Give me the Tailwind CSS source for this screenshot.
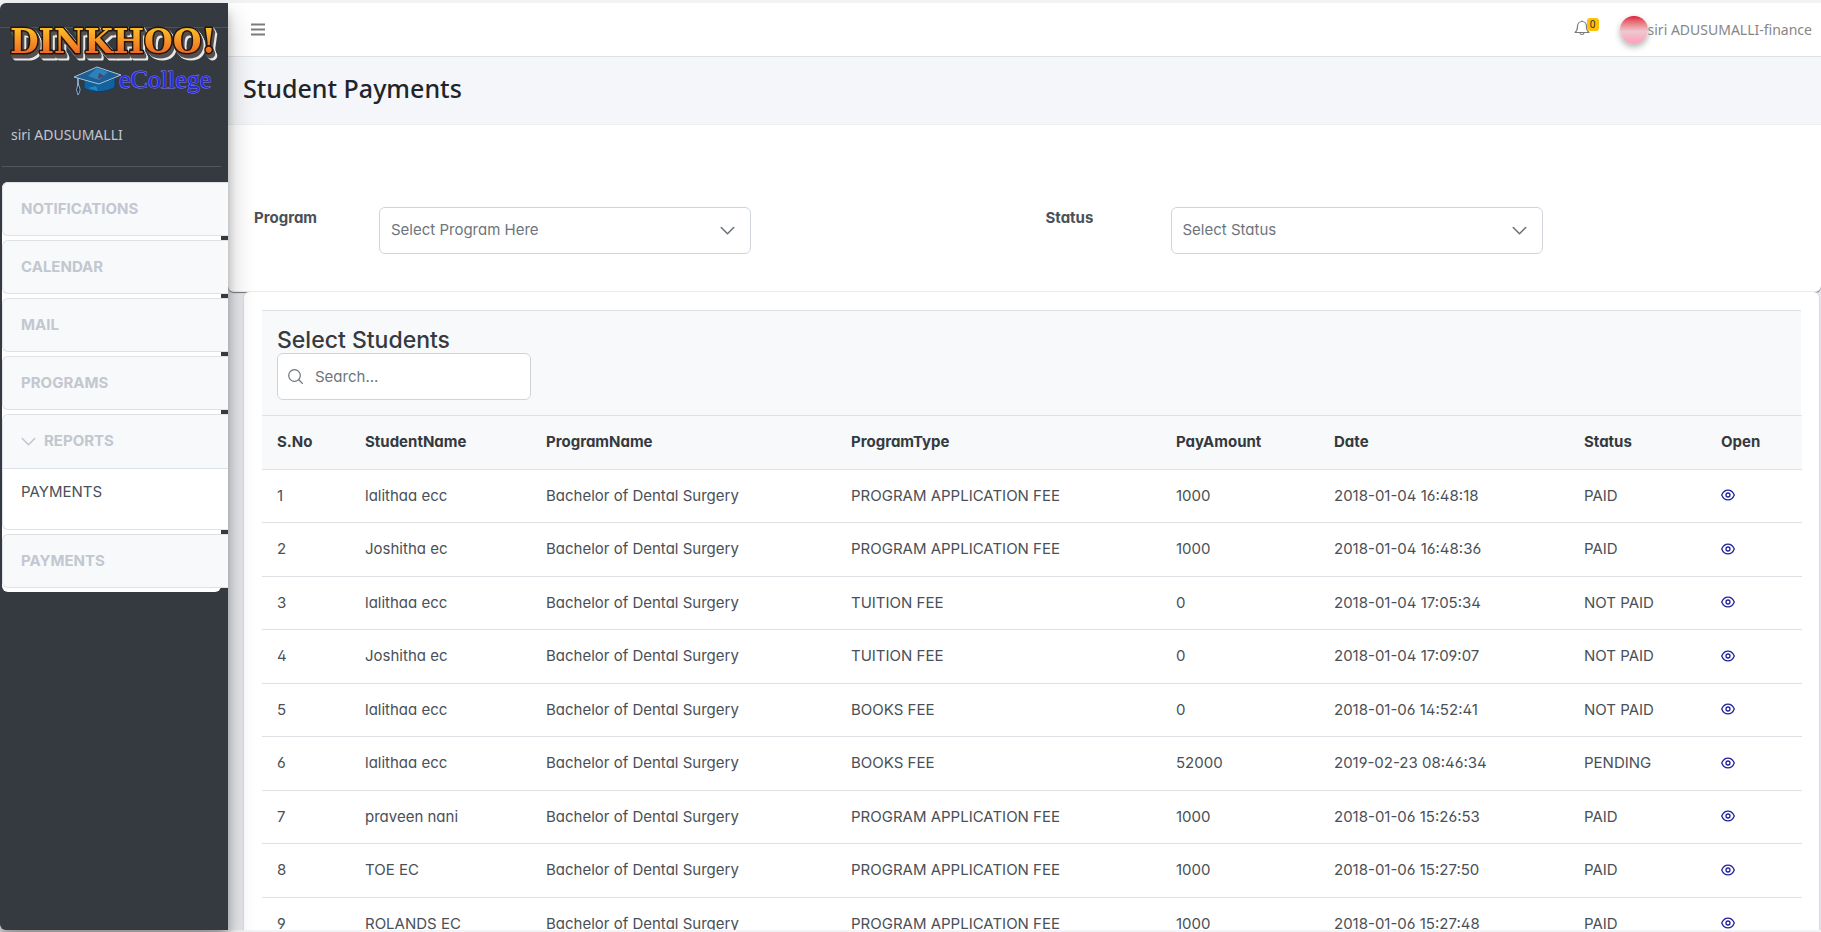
<!DOCTYPE html>
<html lang="en">
<head>
<meta charset="utf-8">
<meta name="viewport" content="width=device-width, initial-scale=1">
<title>Student Payments</title>
<script src="https://cdn.jsdelivr.net/npm/@tailwindcss/browser@4"></script>
</head>
<body class="flex h-screen flex-col overflow-hidden bg-[#f2f3f4] pt-[3px] pb-[2px] font-['Inter',sans-serif] text-[#495057]">
<svg class="hidden" aria-hidden="true">
  <symbol id="eye" viewBox="0 0 14 14"><path d="M.7 7C2 3.900 4.300 2.100 7 2.100S12 3.900 13.300 7C12 10.100 9.700 11.900 7 11.900S2 10.100.7 7Z" fill="none" stroke="currentColor" stroke-width="1.300"/><circle cx="7" cy="7" r="2" fill="none" stroke="currentColor" stroke-width="1.300"/></symbol>
  <symbol id="chevron" viewBox="0 0 14 14"><path d="M1.200 4.200 7 10l5.800-5.800" fill="none" stroke="currentColor" stroke-width="1.500" stroke-linecap="round" stroke-linejoin="round"/></symbol>
</svg>
<div class="flex min-h-0 flex-1">
  <aside class="z-10 flex w-[228px] shrink-0 flex-col rounded-l-md bg-[#343a40] shadow-[0_14px_28px_rgba(0,0,0,0.25),0_10px_10px_rgba(0,0,0,0.22)]">
    <a href="#" class="mt-6 block border-t border-[#4b545c]" aria-label="Dinkhoo eCollege">
      <svg class="block h-[74px] w-[228px] overflow-visible" viewBox="0 0 228 74">
        <defs>
          <linearGradient id="gold" x1="0" y1="0" x2="0" y2="1"><stop offset="0.200" stop-color="#fcb827"/><stop offset="0.800" stop-color="#ee6a25"/></linearGradient>
        </defs>
        <text x="10" y="25" font-family="DejaVu Serif" font-weight="700" font-size="33" fill="url(#gold)" stroke="#24160c" stroke-width="3" stroke-linejoin="round" paint-order="stroke" class="[filter:drop-shadow(1px_2px_0_#55504e)_drop-shadow(1px_2px_0_#55504e)_drop-shadow(1px_1px_0_#e8e8e8)_drop-shadow(1px_1px_0_#e8e8e8)]">DINKHOO!</text>
        <path d="M84 50v10c7 5 23 5 31-1V50L99 56Z" fill="#12629f" stroke="#0d3f69"/>
        <path d="M74 49 97 39 121 47 99 56Z" fill="#1c5f94" stroke="#a9c4d8" stroke-width="1"/>
        <path d="M97 40 108 44 99 52 88 48Z" fill="#2b83b8"/><path d="M99 45l5 3-6 3Z" fill="#5a3c68"/>
        <path d="M88 60l8-2 2 5Z" fill="#2388c4"/>
        <path d="M78 50v8" stroke="#a9c4d8" stroke-width="1.500"/><path d="M78 56q-3 6 0 11 4-5 0-11Z" fill="#16304a" stroke="#a9c4d8" stroke-width=".8"/>
        <text x="119" y="60" font-family="Liberation Serif" font-size="26" fill="#2a2ae0" stroke="#7c7ce8" stroke-width="1" paint-order="stroke">eCollege</text>
      </svg>
    </a>
    <div class="ml-[2px] mr-[7px] border-b border-[#4f5962] pt-[22px] pb-5 pl-[9px]">
      <a href="#" class="block font-['Noto_Sans'] text-[14px] leading-[22px] text-[#c2c7d0]">siri ADUSUMALLI</a>
    </div>
    <nav class="mt-[15px] ml-[2px] mr-[7px] flex flex-col gap-1 rounded-md bg-white pb-1 text-[15px] font-bold text-[#c2c7d0] [&>*]:-mr-[7px]">
      <a href="#" class="flex h-[54px] items-center rounded-l-md border border-r-0 border-[#dee2e6] bg-[#f8f9fa] pl-[18px]">NOTIFICATIONS</a>
      <a href="#" class="flex h-[54px] items-center rounded-l-md border border-r-0 border-[#dee2e6] bg-[#f8f9fa] pl-[18px]">CALENDAR</a>
      <a href="#" class="flex h-[54px] items-center rounded-l-md border border-r-0 border-[#dee2e6] bg-[#f8f9fa] pl-[18px]">MAIL</a>
      <a href="#" class="flex h-[54px] items-center rounded-l-md border border-r-0 border-[#dee2e6] bg-[#f8f9fa] pl-[18px]">PROGRAMS</a>
      <div class="rounded-l-md border border-r-0 border-[#dee2e6] bg-white">
        <button type="button" aria-expanded="true" class="flex h-[54px] w-full items-center gap-2 rounded-tl-md border-b border-[#dee2e6] bg-[#f8f9fa] pl-[18px]"><svg class="h-[15px] w-[15px]"><use href="#chevron"/></svg>REPORTS</button>
        <a href="#" class="block h-[60px] pt-3 pl-[18px] leading-[22px] font-normal text-[#495057]">PAYMENTS</a>
      </div>
      <a href="#" class="flex h-[54px] items-center rounded-l-md border border-r-0 border-[#dee2e6] bg-[#f8f9fa] pl-[18px]">PAYMENTS</a>
    </nav>
  </aside>

  <div class="flex min-w-0 flex-1 flex-col overflow-hidden bg-[#e6e7eb]">
    <header class="flex h-[54px] shrink-0 items-center border-b border-[#dee2e6] bg-white pr-[9px] pl-[23px] font-['Noto_Sans'] text-[14px] text-[#868686]">
      <button type="button" aria-label="Toggle menu"><svg class="h-[13px] w-[14px]" viewBox="0 0 14 13"><path d="M0 1.500h14M0 6.500h14M0 11.500h14" stroke="#7c7c7c" stroke-width="2"/></svg></button>
      <button type="button" aria-label="Notifications" class="relative ml-auto mr-[30px] mb-1"><svg class="h-4 w-4" viewBox="0 0 16 16"><path d="M1 12.500h14c-2-1.500-2.500-3-2.500-6C12.500 3.500 10.500 1.500 8 1.500S3.500 3.500 3.500 6.500c0 3-.5 4.500-2.500 6ZM6 13c.3 2 3.700 2 4 0M8 1.500V.5" fill="none" stroke="#7c7c7c" stroke-width="1.200" stroke-linejoin="round"/></svg><span class="absolute -top-[2px] left-[13px] flex h-[13px] w-3 items-center justify-center rounded-[3px] bg-[#ffc107] text-[10px] text-[#1f2d3d]">0</span></button>
      <a href="#" class="flex items-center"><span class="h-7 w-7 rounded-full bg-linear-to-b from-[#dc143c] via-[#ecc8d2] via-55% to-[#ff9cb8] shadow-[0_3px_6px_rgba(0,0,0,0.3)]"></span>siri ADUSUMALLI-finance</a>
    </header>
    <div class="flex h-[68px] shrink-0 items-center border-b border-[#eceef0] bg-[#f4f6f9] pb-1 pl-[15px]">
      <h1 class="font-['Noto_Sans'] text-[25px] font-medium text-[#212529]">Student Payments</h1>
    </div>
    <section class="shrink-0 overflow-hidden rounded-b-md border-b border-[#ececec] bg-white pt-[82px] pb-[37px] pl-[26px] text-[15px] shadow-[0_1px_1px_rgba(0,0,0,0.5)] [font-feature-settings:'cv02','cv03','cv04','cv11']">
      <form class="-mr-4 grid grid-cols-2">
        <div class="flex items-start">
          <label for="program" class="w-[125px] leading-[22px] font-bold">Program</label>
          <div class="relative w-[47%]">
            <select id="program" class="h-[47px] w-full appearance-none rounded-md border border-[#ced4da] bg-white pr-10 pl-[11px] text-[#6c757d]"><option>Select Program Here</option></select>
            <svg class="pointer-events-none absolute top-4 right-4 h-[15px] w-[15px] text-[#6c757d]"><use href="#chevron"/></svg>
          </div>
        </div>
        <div class="flex items-start">
          <label for="status" class="w-[125px] leading-[22px] font-bold">Status</label>
          <div class="relative w-[47%]">
            <select id="status" class="h-[47px] w-full appearance-none rounded-md border border-[#ced4da] bg-white pr-10 pl-[11px] text-[#6c757d]"><option>Select Status</option></select>
            <svg class="pointer-events-none absolute top-4 right-4 h-[15px] w-[15px] text-[#6c757d]"><use href="#chevron"/></svg>
          </div>
        </div>
      </form>
    </section>
    <main class="mr-px ml-[15px] flex-1 overflow-hidden rounded-t-md border-x border-[#d8dadd] bg-white px-[18px] pt-[18px] text-[15px] [font-feature-settings:'cv02','cv03','cv04','cv11']">
      <div class="h-[105px] border-t border-[#dee2e6] bg-[#f8f9fa] px-[15px] pt-4">
        <h2 class="text-[23px] leading-[26px] font-medium text-[#343a40]">Select Students</h2>
        <div class="relative w-[254px]">
          <svg class="absolute top-4 left-[11px] h-[15px] w-[15px]" viewBox="0 0 15 15"><circle cx="6.500" cy="6.500" r="5.800" fill="none" stroke="#6c757d" stroke-width="1.200"/><path d="m10.800 10.800 3.600 3.600" stroke="#6c757d" stroke-width="1.300" stroke-linecap="round"/></svg>
          <input type="search" aria-label="Search students" placeholder="Search..." class="h-[47px] w-full rounded-md border border-[#ced4da] bg-white pr-3 pl-[37px] placeholder:text-[#6c757d]">
        </div>
      </div>
      <table class="w-full table-fixed border-collapse text-left [&_td]:px-[15px] [&_td]:whitespace-nowrap [&_th]:px-[15px] [&_tr]:border-b [&_tr]:border-[#dee2e6]">
        <colgroup><col class="w-[88px]"><col class="w-[181px]"><col class="w-[305px]"><col class="w-[325px]"><col class="w-[158px]"><col class="w-[250px]"><col class="w-[137px]"><col class="w-[96px]"></colgroup>
        <thead class="border-t border-[#dee2e6] bg-[#f8f9fa] text-[#343a40]">
          <tr class="h-[54px]"><th>S.No</th><th>StudentName</th><th>ProgramName</th><th>ProgramType</th><th>PayAmount</th><th>Date</th><th>Status</th><th>Open</th></tr>
        </thead>
        <tbody class="[&_tr:nth-child(even)]:h-[54px] [&_tr:nth-child(odd)]:h-[53px] [&_a]:block [&_a]:w-[14px] [&_a]:pb-[2px] [&_a]:text-[#22229a] [&_svg]:h-[14px] [&_svg]:w-[14px]">
          <tr><td>1</td><td>lalithaa ecc</td><td>Bachelor of Dental Surgery</td><td>PROGRAM APPLICATION FEE</td><td>1000</td><td>2018-01-04 16:48:18</td><td>PAID</td><td><a href="#" aria-label="Open payment 1"><svg><use href="#eye"/></svg></a></td></tr>
          <tr><td>2</td><td>Joshitha ec</td><td>Bachelor of Dental Surgery</td><td>PROGRAM APPLICATION FEE</td><td>1000</td><td>2018-01-04 16:48:36</td><td>PAID</td><td><a href="#" aria-label="Open payment 2"><svg><use href="#eye"/></svg></a></td></tr>
          <tr><td>3</td><td>lalithaa ecc</td><td>Bachelor of Dental Surgery</td><td>TUITION FEE</td><td>0</td><td>2018-01-04 17:05:34</td><td>NOT PAID</td><td><a href="#" aria-label="Open payment 3"><svg><use href="#eye"/></svg></a></td></tr>
          <tr><td>4</td><td>Joshitha ec</td><td>Bachelor of Dental Surgery</td><td>TUITION FEE</td><td>0</td><td>2018-01-04 17:09:07</td><td>NOT PAID</td><td><a href="#" aria-label="Open payment 4"><svg><use href="#eye"/></svg></a></td></tr>
          <tr><td>5</td><td>lalithaa ecc</td><td>Bachelor of Dental Surgery</td><td>BOOKS FEE</td><td>0</td><td>2018-01-06 14:52:41</td><td>NOT PAID</td><td><a href="#" aria-label="Open payment 5"><svg><use href="#eye"/></svg></a></td></tr>
          <tr><td>6</td><td>lalithaa ecc</td><td>Bachelor of Dental Surgery</td><td>BOOKS FEE</td><td>52000</td><td>2019-02-23 08:46:34</td><td>PENDING</td><td><a href="#" aria-label="Open payment 6"><svg><use href="#eye"/></svg></a></td></tr>
          <tr><td>7</td><td>praveen nani</td><td>Bachelor of Dental Surgery</td><td>PROGRAM APPLICATION FEE</td><td>1000</td><td>2018-01-06 15:26:53</td><td>PAID</td><td><a href="#" aria-label="Open payment 7"><svg><use href="#eye"/></svg></a></td></tr>
          <tr><td>8</td><td>TOE EC</td><td>Bachelor of Dental Surgery</td><td>PROGRAM APPLICATION FEE</td><td>1000</td><td>2018-01-06 15:27:50</td><td>PAID</td><td><a href="#" aria-label="Open payment 8"><svg><use href="#eye"/></svg></a></td></tr>
          <tr><td>9</td><td>ROLANDS EC</td><td>Bachelor of Dental Surgery</td><td>PROGRAM APPLICATION FEE</td><td>1000</td><td>2018-01-06 15:27:48</td><td>PAID</td><td><a href="#" aria-label="Open payment 9"><svg><use href="#eye"/></svg></a></td></tr>
        </tbody>
      </table>
    </main>
  </div>
</div>
</body>
</html>
